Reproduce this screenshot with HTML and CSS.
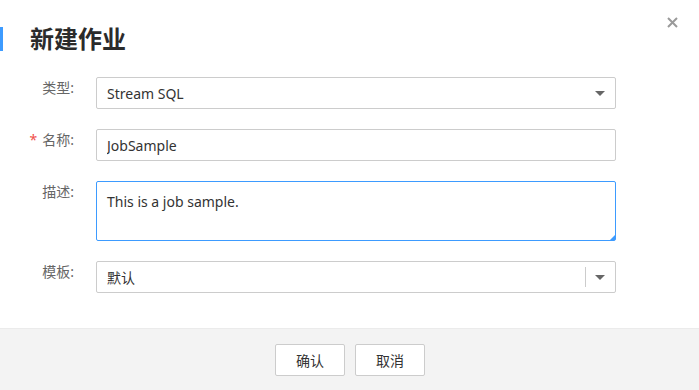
FILE: index.html
```html
<!DOCTYPE html>
<html>

<head>
    <title>新建作业</title>
    <link rel="stylesheet" href="styles.css">
</head>

<body>
    <div class="dialog">
        <div class="dialog-header">
            <h1 class="dialog-title">新建作业</h1>
            <svg class="close" width="11" height="11" viewBox="0 0 11 11">
                <path d="M1 1 L10 10 M10 1 L1 10" stroke="#9a9a9a" stroke-width="2" fill="none"/>
            </svg>
        </div>

        <form class="dialog-body">
            <div class="form-row">
                <label class="form-label">类型:</label>
                <div class="select">
                    <span class="select-value">Stream SQL</span>
                    <span class="caret"></span>
                </div>
            </div>
            <div class="form-row">
                <label class="form-label"><span class="required">*</span>名称:</label>
                <input class="text-input" type="text" value="JobSample">
            </div>
            <div class="form-row">
                <label class="form-label">描述:</label>
                <div class="textarea">
                    <span>This is a job sample.</span>
                    <span class="resize-handle"></span>
                </div>
            </div>
            <div class="form-row">
                <label class="form-label">模板:</label>
                <div class="select">
                    <span class="select-value">默认</span>
                    <span class="select-divider"></span>
                    <span class="caret"></span>
                </div>
            </div>
        </form>

        <div class="dialog-footer">
            <button class="btn" type="button">确认</button>
            <button class="btn" type="button">取消</button>
        </div>
    </div>
</body>

</html>
```

FILE: styles.css
```css
body {
    margin: 0;
    font-family: "Noto Sans", "Noto Sans CJK SC", sans-serif;
    font-size: 14px;
    color: #333333;
    background-color: #ffffff;
}

.dialog {
    width: 699px;
    height: 390px;
    display: flex;
    flex-direction: column;
}

.dialog-header {
    position: relative;
    padding-top: 27px;
    height: 50px;
    box-sizing: border-box;
}

.dialog-title {
    margin: 0;
    border-left: 3px solid #3d9bff;
    padding-left: 27px;
    font-size: 24px;
    line-height: 24px;
    font-weight: bold;
    color: #2b2b2b;
}

.close {
    position: absolute;
    top: 17px;
    left: 667px;
}

.dialog-body {
    flex: 1;
    padding-top: 27px;
}

.form-row {
    display: flex;
    align-items: flex-start;
    margin-bottom: 20px;
}

.form-label {
    width: 74px;
    margin-right: 22px;
    text-align: right;
    color: #666666;
    line-height: 20px;
    padding-top: 1px;
}

.required {
    color: #f0504a;
    margin-right: 5px;
}

.select,
.text-input,
.textarea {
    width: 520px;
    height: 32px;
    box-sizing: border-box;
    border: 1px solid #cccccc;
    border-radius: 2px;
    background-color: #ffffff;
    font-family: inherit;
    font-size: 14px;
    color: #333333;
    padding: 0 10px;
    margin: 0;
}

.select {
    display: flex;
    align-items: center;
}

.select-value {
    flex: 1;
}

.select-divider {
    width: 1px;
    height: 20px;
    background-color: #cccccc;
    margin-right: 9px;
}

.caret {
    width: 0;
    height: 0;
    border-left: 5px solid transparent;
    border-right: 5px solid transparent;
    border-top: 5px solid #666666;
}

.text-input {
    outline: none;
}

.textarea {
    position: relative;
    height: 60px;
    border-color: #3d9bff;
    padding-top: 10px;
    line-height: 20px;
}

.resize-handle {
    position: absolute;
    right: 0;
    bottom: 0;
    width: 0;
    height: 0;
    border-left: 5px solid transparent;
    border-bottom: 5px solid #3d9bff;
}

.dialog-footer {
    height: 62px;
    box-sizing: border-box;
    background-color: #f3f3f3;
    border-top: 1px solid #ebebeb;
    padding-top: 15px;
    padding-left: 1px;
    display: flex;
    justify-content: center;
    align-items: flex-start;
    gap: 10px;
}

.btn {
    width: 70px;
    height: 32px;
    border: 1px solid #cccccc;
    border-radius: 2px;
    background-color: #ffffff;
    font-family: inherit;
    font-size: 14px;
    color: #333333;
    cursor: pointer;
}
```
